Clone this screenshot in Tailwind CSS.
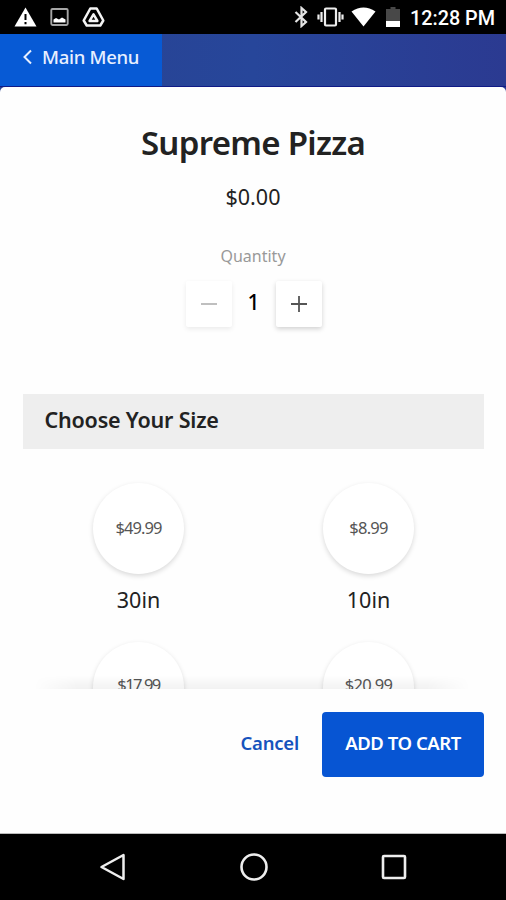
<!DOCTYPE html>
<html lang="en">
<head>
<meta charset="utf-8">
<title>Supreme Pizza</title>
<script src="https://cdn.jsdelivr.net/npm/@tailwindcss/browser@4"></script>
</head>
<body class="w-[506px] h-[900px] overflow-hidden bg-white text-[#222] font-['Noto_Sans','Open_Sans',sans-serif] flex flex-col whitespace-nowrap">
<div class="h-[34px] shrink-0 bg-black flex items-center justify-between pl-[14px] pr-[11px] text-white">
  <div class="flex items-center gap-[13px]">
    <svg class="w-[23px] h-[22px]" viewBox="0 0 23 22"><path d="M11.500 1.500L22.500 20.500H0.500Z" fill="#fff"/><path d="M11.500 8v6M11.500 16v2.200" stroke="#000" stroke-width="2"/></svg>
    <svg class="w-[19px] h-[20px]" viewBox="0 0 19 20"><rect x="1.300" y="2" width="16.400" height="16" rx="1.200" fill="none" stroke="#a5a5a5" stroke-width="1.900"/><path d="M3.500 15.500v-3l2.500-1.500 3 1.500 3-2 3.500 2v3z" fill="#fff"/></svg>
    <svg class="w-[23px] h-[22px]" viewBox="0 0 23 22" fill="none" stroke="#f4f4f4" stroke-width="2.500" stroke-linejoin="round"><path d="M8.300 2.500h6.400l6.600 12-3 5H4.700l-3-5z"/><path d="M11.500 8.400l3.900 6.500H7.600z"/></svg>
  </div>
  <div class="flex items-center">
    <svg class="w-[15px] h-[22px] mr-[8px]" viewBox="0 0 15 22" fill="none" stroke="#e4e4e4" stroke-width="2.200"><path d="M1.500 6l10.500 10-4.500 4V2l4.500 4L1.500 16"/></svg>
    <svg class="w-[27px] h-[22px] mr-[7px]" viewBox="0 0 27 22" fill="none" stroke="#eee" stroke-width="2.200"><rect x="8" y="2.500" width="11" height="17" rx="1"/><path d="M4.500 6v10M22.500 6v10M1.500 8.500v5M25.500 8.500v5"/></svg>
    <svg class="w-[25px] h-[20px] mr-[10px]" viewBox="0 0 25 20"><path d="M0.500 4.500Q12.500-3.500 24.500 4.500L12.500 19.500Z" fill="#fff"/></svg>
    <svg class="w-[14px] h-[22px] mr-[10px]" viewBox="0 0 14 22"><path d="M4.500 1h5v2H14v12H0V3h4.500z" fill="#484848"/><path d="M0 15h14v6H0z" fill="#fff"/></svg>
    <span class="font-[Roboto,sans-serif] font-medium text-[19.800px] leading-[34px] w-[85px] pt-[3px]">12:28 PM</span>
  </div>
</div>
<div class="h-[800px] shrink-0 bg-linear-to-r from-[#284291] via-[#27469a] to-[#2b3a91] flex flex-col">
  <header class="h-[53px] shrink-0 flex border-b border-[#101a86]">
    <div class="w-[162px] bg-[#075ad5] text-[#e7efff] flex items-center pl-[21px] pb-[6px]">
      <svg class="w-[12px] h-[16px] mr-[9px]" viewBox="0 0 12 16" fill="none" stroke="currentColor" stroke-width="2"><path d="M10 1.500L3.500 8l6.500 6.500"/></svg>
      <span class="text-[18.500px] font-medium tracking-[-0.300px]">Main Menu</span>
    </div>
  </header>
  <main class="h-[602px] shrink-0 bg-[#fefefe] rounded-t-[5px] flex flex-col items-center overflow-hidden relative">
    <h1 class="mt-[31px] h-[50px] leading-[50px] text-[33px] font-semibold tracking-[-0.700px]">Supreme Pizza</h1>
    <p class="mt-[14px] h-[30px] leading-[30px] text-[21.500px]">$0.00</p>
    <p class="mt-[32px] h-[24px] leading-[24px] text-[16px] text-[#999]">Quantity</p>
    <div class="mt-[13px] flex items-center pl-px">
      <div class="size-[46px] bg-white rounded-[2px] shadow-[0_2px_5px_rgba(0,0,0,0.080)] flex items-center justify-center"><svg class="size-[18px]" viewBox="0 0 18 18"><path d="M1 9h16" stroke="#aaa" stroke-width="1.500"/></svg></div>
      <span class="w-[44px] text-center text-[21px] font-medium text-black leading-[40px] pb-[5px]">1</span>
      <div class="size-[46px] bg-white rounded-[2px] shadow-[0_2px_5px_rgba(0,0,0,0.180)] flex items-center justify-center"><svg class="size-[18px]" viewBox="0 0 18 18"><path d="M1 9h16M9 1v16" stroke="#555" stroke-width="1.800"/></svg></div>
    </div>
    <h2 class="mt-[67px] w-[461px] h-[55px] shrink-0 bg-[#eee] pl-[22px] leading-[51px] text-[21.500px] tracking-[-0.200px] font-semibold">Choose Your Size</h2>
    <div class="mt-[34px] w-[461px] shrink-0 grid grid-cols-2 gap-y-[26px] justify-items-center text-center pl-px">
      <div><div class="size-[91px] rounded-full bg-white shadow-[0_2px_5px_rgba(0,0,0,0.150)] leading-[89px] text-[16.500px] tracking-[-0.900px] text-[#555]">$49.99</div><div class="h-[40px] mt-[2px] leading-[48px] text-[21.500px]">30in</div></div>
      <div><div class="size-[91px] rounded-full bg-white shadow-[0_2px_5px_rgba(0,0,0,0.150)] leading-[89px] text-[16.500px] tracking-[-0.700px] text-[#555]">$8.99</div><div class="h-[40px] mt-[2px] leading-[48px] text-[21.500px]">10in</div></div>
      <div><div class="size-[91px] rounded-full bg-white shadow-[0_2px_5px_rgba(0,0,0,0.150)] leading-[86px] text-[16.500px] tracking-[-1.500px] text-[#555]">$17.99</div></div>
      <div><div class="size-[91px] rounded-full bg-white shadow-[0_2px_5px_rgba(0,0,0,0.150)] leading-[86px] text-[16.500px] tracking-[-0.700px] text-[#555]">$20.99</div></div>
    </div>
    <div class="absolute bottom-0 left-[34px] w-[436px] h-[14px] bg-linear-to-t from-black/5 to-transparent mask-x-from-90% mask-x-to-100%"></div>
  </main>
  <footer class="h-[145px] shrink-0 bg-[#fefefe] flex items-start justify-end pt-[23px] pr-[22px] border-b border-[#bbb]">
    <div class="h-[65px] leading-[62px] text-[18.500px] font-semibold text-[#1653bd] tracking-[-0.200px] mr-[23px]">Cancel</div>
    <div class="w-[162px] h-[65px] rounded-[4px] bg-[#0755d3] text-white text-center leading-[62px] text-[18.500px] tracking-[-0.450px] font-semibold">ADD TO CART</div>
  </footer>
</div>
<nav class="h-[66px] shrink-0 bg-black flex items-center justify-between pl-[99px] pr-[98px]">
  <svg class="size-[28px]" viewBox="0 0 28 28" fill="none" stroke="#eee" stroke-width="2.500" stroke-linejoin="round"><path d="M24.500 2v24L2.500 14z"/></svg>
  <svg class="size-[28px]" viewBox="0 0 28 28" fill="none" stroke="#eee" stroke-width="2.600"><circle cx="14" cy="14" r="12.500"/></svg>
  <svg class="size-[28px]" viewBox="0 0 28 28" fill="none" stroke="#eee" stroke-width="2.600"><rect x="3" y="3" width="22" height="22" rx="1"/></svg>
</nav>
</body>
</html>
